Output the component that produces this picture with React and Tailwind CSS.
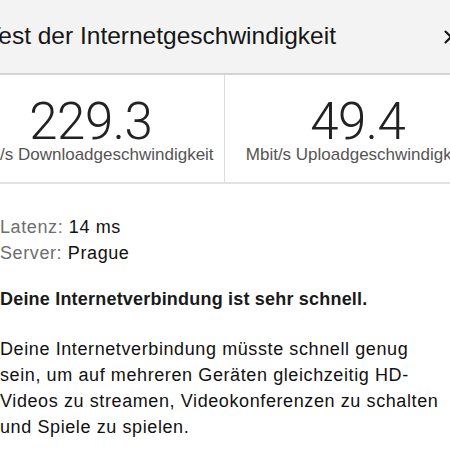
import { X } from 'lucide-react';

const sans = "font-['Liberation_Sans','Helvetica_Neue',Arial,sans-serif]";

const Stat = ({ value, label, divider }) => (
  <div
    className={`flex h-[107px] flex-col items-center pt-[23.5px] ${
      divider ? 'border-r border-[#dcdcdc]' : ''
    }`}
  >
    <span className="font-['Roboto',sans-serif] text-[51px] font-light leading-[46px] tracking-[-0.5px] text-[#222]">
      {value}
    </span>
    <span className="text-[17px] leading-[20px] text-[#555]">{label}</span>
  </div>
);

export default function App() {
  return (
    <div className={`h-[450px] w-[450px] overflow-hidden bg-white ${sans}`}>
      <div className="-ml-[42px] w-[533px]">
        <div className="flex h-[75px] items-center justify-between border-b-2 border-[#d4d4d4] bg-[#f3f3f3] pl-[28px] pr-[29px]">
          <h1 className="text-[24.5px] font-normal text-[#161616]">
            Test der Internetgeschwindigkeit
          </h1>
          <X size={22} strokeWidth={2.2} className="text-[#111]" />
        </div>

        <div className="grid grid-cols-2 border-b-2 border-[#e2e2e2]">
          <Stat value="229.3" label="Mbit/s Downloadgeschwindigkeit" divider />
          <Stat value="49.4" label="Mbit/s Uploadgeschwindigkeit" />
        </div>

        <div className="pl-[42px] pt-[30px] text-[18px] leading-[26px] tracking-[0.6px] text-[#111]">
          <p>
            <span className="text-[#6e6e6e]">Latenz:</span> 14 ms
          </p>
          <p>
            <span className="text-[#6e6e6e]">Server:</span> Prague
          </p>
          <p className="mt-[20px] font-semibold tracking-[0.2px] text-[#1a1a1a]">
            Deine Internetverbindung ist sehr schnell.
          </p>
          <p className="mt-[24px] w-[445px]">
            Deine Internetverbindung müsste schnell genug sein, um auf mehreren Geräten
            gleichzeitig HD-Videos zu streamen, Videokonferenzen zu schalten und Spiele zu
            spielen.
          </p>
        </div>
      </div>
    </div>
  );
}
